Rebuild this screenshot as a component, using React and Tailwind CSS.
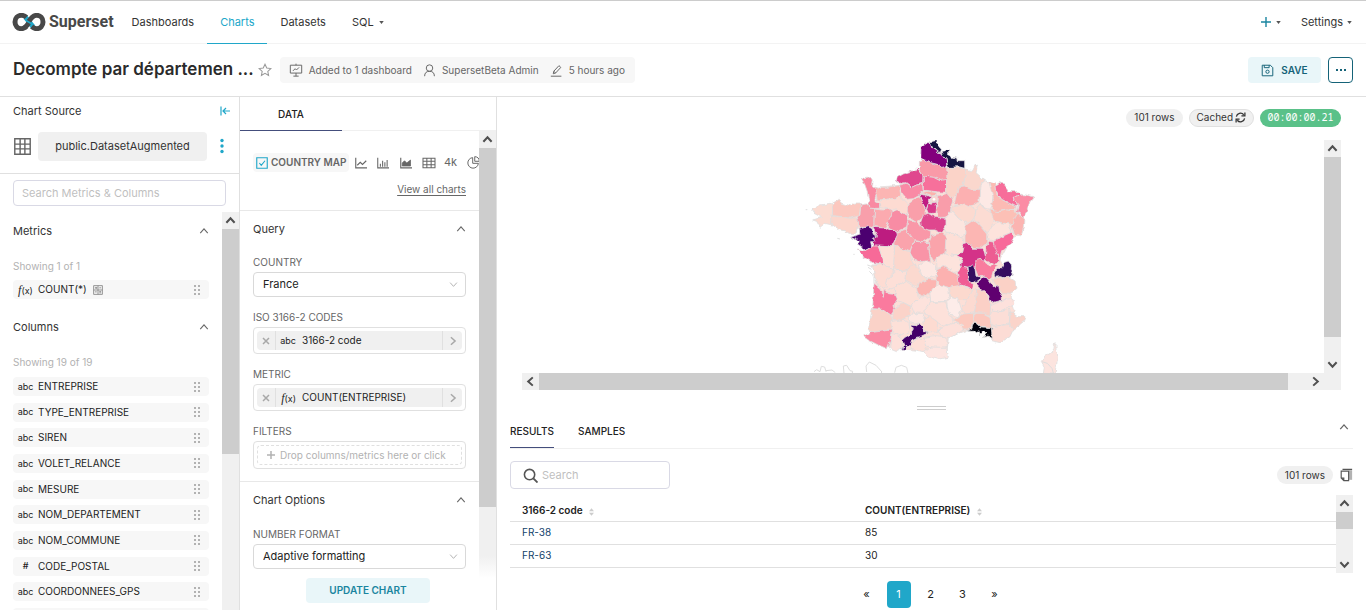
import React from "react";

const DEPARTMENTS = [
  ["#fcdcd2", "35,240 60,225 90,220 97,222 98,240 96,258 96,285 75,280 60,292 50,274 38,270 65,262 42,250"],
  ["#fcc8bf", "97,220 108,214 118,208 124,220 132,222 150,228 165,222 182,222 180,238 178,258 160,262 150,265 130,260 98,257"],
  ["#fcd6cc", "96,258 112,260 130,260 150,265 170,263 174,290 168,310 150,310 138,302 120,300 95,282"],
  ["#f89fab", "182,225 200,222 215,235 224,237 222,262 222,290 205,292 178,292 170,270 180,255"],
  ["#f98aa2", "183,142 194,146 212,142 217,150 215,165 224,172 232,188 225,205 226,216 240,222 238,235 215,235 203,225 208,215 205,205 202,185 195,165"],
  ["#fcb5b3", "224,168 235,172 260,172 285,168 298,166 302,195 285,205 260,208 232,210 228,190"],
  ["#fddbd2", "238,214 260,208 285,205 302,198 325,222 330,240 322,256 300,245 280,238 265,238 240,232"],
  ["#fbaaaf", "224,237 250,240 272,236 276,250 266,275 255,292 222,290 222,270"],
  ["#f88ca4", "274,246 290,240 322,256 326,268 320,290 305,298 290,305 262,294 266,275"],
  ["#e0478e", "288,155 292,142 310,132 335,124 353,116 369,134 368,160 350,165 335,172 318,158 300,160"],
  ["#f98aa5", "298,166 318,160 335,172 350,165 368,162 370,182 360,195 340,206 322,208 308,192"],
  ["#f99aa8", "358,94 378,90 392,98 412,103 441,112 443,150 420,152 400,142 370,138 358,118"],
  ["#f76f9b", "370,138 400,142 420,152 440,148 440,187 418,186 400,184 370,180"],
  ["#83007d", "363,50 378,38 390,38 396,55 412,66 425,68 432,82 438,82 441,110 425,112 412,103 392,98 378,90 362,90"],
  ["#171242", "390,36 410,31 414,46 424,58 422,66 412,66 398,54"],
  ["#171242", "427,64 436,62 440,57 446,60 446,73 457,82 470,84 472,92 494,92 494,115 475,110 460,112 445,112 438,84 430,80"],
  ["#fbd3c8", "441,114 470,112 500,118 495,145 490,165 475,172 470,190 458,208 440,190 440,150"],
  ["#fad7cd", "500,118 518,122 524,110 532,105 528,128 542,140 555,152 545,160 540,178 512,178 490,168 494,145"],
  ["#fcb0b1", "475,170 490,168 512,178 538,178 538,215 520,224 510,228 490,226 462,225"],
  ["#fde9e5", "540,165 555,152 572,158 578,190 578,215 570,238 550,232 537,215"],
  ["#fcbbb4", "566,154 588,160 590,190 605,208 646,230 645,242 620,240 585,246 572,232 580,205"],
  ["#f76d9a", "588,165 598,158 612,162 628,185 655,185 668,192 655,199 640,198 642,210 655,225 648,230 605,208 590,185"],
  ["#fb8ca5", "640,200 672,194 702,200 690,215 672,262 650,245 655,225 642,210"],
  ["#fcc0b6", "570,240 600,245 620,240 645,242 650,252 642,280 630,286 605,278 578,270"],
  ["#fbb4b1", "650,250 672,262 670,295 662,318 642,310 636,290"],
  ["#fcdad0", "458,232 478,226 495,222 510,228 525,235 528,248 520,268 500,280 475,265 458,245"],
  ["#fcdcd3", "528,236 540,222 552,235 575,250 580,270 568,305 558,308 535,282 525,265"],
  ["#fce5df", "438,250 458,246 475,265 498,282 495,312 480,322 455,310 438,310 430,290"],
  ["#fcb6b3", "495,288 520,270 535,282 560,312 560,340 540,355 510,350 495,338"],
  ["#fde3dc", "565,310 580,285 600,278 630,282 632,308 605,318 580,332 562,328"],
  ["#fddfd8", "630,290 642,310 633,312"],
  ["#fddfd7", "436,312 455,310 488,322 492,342 485,370 455,376 435,368"],
  ["#f8699a", "580,335 600,322 632,308 642,318 630,345 605,365 600,384 592,376 580,355"],
  ["#ed5d92", "558,347 568,334 580,336 582,350 592,374 596,398 585,404 570,398 556,390"],
  ["#d43388", "490,345 505,340 520,355 550,355 558,385 555,392 535,395 528,410 505,412 480,408 488,385 470,374 485,368"],
  ["#c01d82", "358,193 378,195 392,202 388,215 378,238 364,215"],
  ["#fcb3ac", "362,188 385,184 412,188 412,196 392,198"],
  ["#fad5ce", "394,202 412,200 412,216 394,216"],
  ["#d93b8b", "385,222 405,216 410,230 408,250 385,250 380,238"],
  ["#f99daa", "412,198 440,190 445,195 458,212 450,245 436,262 412,262 410,235"],
  ["#f99faa", "325,222 345,207 358,200 378,240 378,255 362,268 350,278 330,265 325,245"],
  ["#df478e", "362,276 370,255 385,250 405,262 438,265 438,290 425,310 405,300 380,300 364,290"],
  ["#f998a8", "324,268 350,278 364,290 392,304 392,320 370,335 345,332 330,315 320,298"],
  ["#faa3ac", "290,305 318,298 332,316 345,332 335,350 330,365 310,358 284,345"],
  ["#faa4ab", "392,318 425,308 438,318 435,370 420,383 400,392 388,370 385,335"],
  ["#f994a7", "335,350 345,335 370,335 385,338 388,370 392,392 360,395 340,385 330,368"],
  ["#bd1b80", "218,292 255,294 290,306 292,315 280,340 262,350 222,350 215,335 232,318"],
  ["#4b0070", "152,322 180,312 178,298 205,290 216,296 220,310 232,318 220,326 225,335 212,335 215,350 200,360 185,350 172,342 178,335 165,328"],
  ["#f76a98", "172,357 195,362 220,348 235,348 246,380 248,402 218,398 190,380"],
  ["#fddfd7", "235,348 262,350 282,343 284,380 280,420 250,402 246,380"],
  ["#fcd7cd", "284,344 310,358 330,367 335,390 345,405 320,420 290,422 281,412"],
  ["#fddcd3", "218,408 250,402 285,422 262,445 262,468 250,475 238,462 225,445"],
  ["#fddfd7", "265,445 290,422 322,420 318,450 290,470 265,480 258,465"],
  ["#fbd9cf", "320,420 345,400 360,430 378,448 350,468 335,460 318,450"],
  ["#fde8e3", "355,405 385,393 410,410 410,435 385,448 365,435"],
  ["#fcb5b1", "348,480 355,458 385,448 408,450 405,475 378,498 360,497"],
  ["#fddfd6", "285,472 315,452 350,475 355,505 332,528 310,518 290,510"],
  ["#fde8e3", "390,490 405,470 420,462 445,470 450,505 435,515 392,515"],
  ["#fde3dc", "408,385 435,368 455,376 470,374 482,398 482,418 460,425 430,410 412,415"],
  ["#fcb1b0", "410,420 430,410 460,422 480,445 478,468 450,472 420,465 408,450"],
  ["#f05c94", "472,425 485,408 502,412 508,450 520,467 515,478 495,468 478,465"],
  ["#340d5e", "504,412 515,405 525,415 528,438 540,440 543,445 530,455 520,460 508,452"],
  ["#f97c9e", "528,392 540,388 565,405 590,405 596,408 580,422 575,440 565,448 555,438 535,440 525,415"],
  ["#360f60", "582,430 605,410 610,398 625,393 635,405 634,420 640,432 620,445 600,440 585,442"],
  ["#fbd1c6", "575,445 605,445 625,442 645,455 648,475 630,490 605,488 590,470"],
  ["#60006f", "528,460 545,446 555,438 570,455 580,470 596,466 600,490 607,500 605,510 575,518 565,495 545,478"],
  ["#fcd9ce", "448,472 480,466 515,478 520,490 505,510 475,508 452,500"],
  ["#fcdad1", "520,478 530,478 528,510 520,548 495,555 485,540 500,512"],
  ["#fbd0c6", "530,478 545,478 562,495 568,510 572,530 570,555 550,550 520,548 528,510"],
  ["#fdece9", "440,515 455,502 475,508 485,540 475,560 445,555"],
  ["#fde1da", "370,540 392,518 435,515 450,555 460,575 430,588 400,570 378,555"],
  ["#fcc9be", "460,570 488,552 520,550 522,575 505,600 480,600 490,585"],
  ["#fcc7bd", "522,550 550,550 570,560 575,592 540,588 522,572"],
  ["#fde1dc", "570,528 610,510 635,505 642,520 628,530 605,545 580,542"],
  ["#fcded7", "570,555 580,540 600,545 630,538 628,578 590,590 572,582"],
  ["#fbd4ca", "632,545 652,560 675,560 670,575 652,590 638,600 628,580"],
  ["#fcdcd5", "575,595 590,588 630,583 640,598 630,620 600,638 575,632"],
  ["#02010f", "500,604 515,598 518,582 528,580 540,590 560,592 576,594 574,600 577,628 568,625 565,618 550,622 558,612 550,604 541,614 536,602 530,612 522,604"],
  ["#fde0da", "415,600 450,582 475,580 490,600 455,622 425,622"],
  ["#fa7a9e", "222,460 240,475 250,502 252,478 262,488 285,490 294,512 282,522 285,540 272,555 250,538 218,536"],
  ["#fad2c8", "216,538 250,540 272,555 278,575 270,598 210,608 205,600"],
  ["#fa8ba4", "188,618 210,608 240,604 278,600 272,630 262,656 235,645 205,630"],
  ["#fde0da", "276,610 290,615 308,630 305,658 290,665 268,656"],
  ["#fde0d8", "272,575 310,568 330,585 325,605 300,618 278,605"],
  ["#fbd3c9", "280,540 310,518 332,530 328,558 305,570 278,568"],
  ["#fde7e2", "325,560 345,548 375,553 370,575 345,582 325,578"],
  ["#fde2dc", "334,525 358,500 390,502 392,518 375,540 345,552"],
  ["#fddbd1", "370,568 390,560 412,575 412,605 382,610 370,592"],
  ["#430068", "335,585 350,588 356,580 370,592 373,605 382,610 365,618 350,622 335,630 330,645 318,652 312,662 305,660 308,652 315,645 307,632 318,622 330,615 340,600"],
  ["#fddfd7", "328,645 350,624 375,626 382,650 370,665 335,655"],
  ["#fde4de", "372,622 405,617 440,620 442,650 410,654 380,648"],
  ["#fde5e1", "370,668 390,651 440,652 445,682 415,688 385,680"],
  ["#fce4df", "724,694 735,680 754,670 762,655 763,642 768,642 768,660 773,672 770,705 764,732 730,732 733,710"],
];

const COLUMNS = ["ENTREPRISE", "TYPE_ENTREPRISE", "SIREN", "VOLET_RELANCE", "MESURE", "NOM_DEPARTEMENT", "NOM_COMMUNE", "CODE_POSTAL", "COORDONNEES_GPS"];

function Icon({ children, className = "size-4", box = "0 0 16 16" }) {
  return (
    <svg viewBox={box} className={className} fill="none" stroke="currentColor" strokeWidth="1" aria-hidden="true">
      {children}
    </svg>
  );
}

function Chevron({ dir = "up", className = "size-3", weight = "1.3" }) {
  const d = { up: "M1.5 8.5L6 3.5L10.5 8.5", down: "M1.5 3.5L6 8.5L10.5 3.5", left: "M8.5 1.5L3.5 6L8.5 10.5", right: "M3.5 1.5L8.5 6L3.5 10.5" }[dir];
  return (
    <Icon box="0 0 12 12" className={`${className} shrink-0`}>
      <path d={d} strokeWidth={weight} />
    </Icon>
  );
}

function ScrollArrow({ dir }) {
  return (
    <span className="flex size-[17px] shrink-0 items-center justify-center text-[#505050]">
      <Chevron dir={dir} className="size-[11px]" weight="2.2" />
    </span>
  );
}

function FranceMap() {
  return (
    <svg viewBox="0 0 810 729" className="h-[243px] w-[270px] shrink-0" role="img" aria-label="Map of France by department">
      <filter id="rough" x="0" y="0" width="1" height="1">
        <feTurbulence type="fractalNoise" baseFrequency="0.06" numOctaves="2" seed="4" />
        <feDisplacementMap in="SourceGraphic" scale="13" xChannelSelector="R" yChannelSelector="G" />
      </filter>
      <g filter="url(#rough)">
        <path
          fill="#fcdfd7"
          stroke="#dedede"
          strokeWidth="2"
          d="M226 172L298 166L353 120L372 138L440 112L500 120L553 155L600 165L650 232L664 312L635 325L600 390L630 440L640 470L632 510L642 540L640 598L600 636L570 600L505 600L445 622L440 682L385 680L370 664L305 655L265 650L210 608L222 540L226 460L218 405L250 400L222 350L222 296L170 298L100 270L97 230L182 230L230 235Z"
        />
        <g stroke="#dedede" strokeWidth="2.4" strokeLinejoin="round">
          {DEPARTMENTS.map(([fill, points]) => (
            <polygon key={points} fill={fill} points={points} />
          ))}
        </g>
      </g>
      <g fill="none" stroke="#dedede" strokeWidth="3">
        <path d="M202 405l12 4M204 412l10 6M208 424l10 10M222 440v20M225 450l18 30M112 325l8 2M17 239h5M160 373h4" />
        <path d="M42 725l8 -6l10 6l4 -16l10 2l4 14M78 722l18 -2l10 8M132 730l-2 -22l10 -2l10 16l8 2l-2 8M200 726l-2 -18l10 -12l20 10l18 20l-6 6M284 728l4 -16l16 -6l16 6l4 18M726 695l16 5l14 15l4 14" />
      </g>
      <circle cx="402" cy="208" r="4" fill="#fff" />
    </svg>
  );
}

function FieldLabel({ children, htmlFor }) {
  return <label htmlFor={htmlFor} className="flex h-4 items-center text-[10px] text-[#666]">{children}</label>;
}

function SelectField({ id, label, value }) {
  return (
    <div>
      <FieldLabel htmlFor={id}>{label}</FieldLabel>
      <div className="relative mt-[2px]">
        <select id={id} className="block h-[25px] w-full appearance-none rounded border border-[#d9d9d9] bg-white px-[9px] text-[11px] text-[#222]">
          <option>{value}</option>
        </select>
        <span className="pointer-events-none absolute inset-y-0 right-[8px] flex items-center text-[#b2b2b2]"><Chevron dir="down" className="size-[9px]" /></span>
      </div>
    </div>
  );
}

function DropPill({ label, kind, value }) {
  return (
    <div>
      <FieldLabel>{label}</FieldLabel>
      <div className="mt-[2px] flex h-[27px] rounded border border-[#e0e0e0] p-[3px]">
        <div className="flex min-w-0 flex-1 items-center rounded-sm bg-[#f0f0f0] text-[10px] text-[#222]">
          <button aria-label={`Remove ${value}`} className="flex h-full w-[19px] items-center justify-center border-r border-[#e0e0e0] text-[#a8a8a8]">
            <Icon box="0 0 8 8" className="size-[8px]"><path d="M1 1L7 7M7 1L1 7" strokeWidth="1.5" /></Icon>
          </button>
          <span className="flex w-[20px] justify-end text-[9px]">{kind}</span>
          <span className="flex-1 pl-[6px]">{value}</span>
          <button aria-label={`Edit ${value}`} className="flex h-full w-[20px] items-center justify-center border-l border-[#e0e0e0] text-[#a8a8a8]"><Chevron dir="right" className="size-[10px]" weight="1.8" /></button>
        </div>
      </div>
    </div>
  );
}

const Fx = () => <span><i className="font-['Liberation_Serif',serif] text-[12px]">f</i>(x)</span>;

function FieldRow({ kind, name, extra }) {
  return (
    <li className="flex h-[19px] shrink-0 items-center rounded bg-[#f7f7f7] pr-[9px] text-[#222]">
      <span className="flex w-[25px] justify-center text-[9px]">{kind}</span>
      <span className="text-[10px]">{name}</span>
      {extra}
      <svg viewBox="0 0 6 10" className="ml-auto h-[10px] w-[6px]" fill="#b2b2b2" aria-hidden="true">
        <path d="M0 0h2v2H0zM4 0h2v2H4zM0 4h2v2H0zM4 4h2v2H4zM0 8h2v2H0zM4 8h2v2H4z" />
      </svg>
    </li>
  );
}

function Section({ title, className = "" }) {
  return (
    <button className={`flex h-5 w-full shrink-0 items-center justify-between text-[11px] text-[#333] ${className}`}>
      {title}<span className="text-[#666]"><Chevron className="size-[10px]" /></span>
    </button>
  );
}

const Caret = () => <svg viewBox="0 0 6 4" className="h-[3px] w-[5px]" fill="#555" aria-hidden="true"><path d="M0 0h6L3 4z" /></svg>;

const GridIcon = ({ className }) => (
  <Icon className={className}><path d="M1.5 1.5h13v13h-13zM1.5 6h13M1.5 10h13M6 1.5v13M10 1.5v13" strokeWidth="1.2" /></Icon>
);

function NavBar() {
  return (
    <header className="flex h-[44px] shrink-0 items-stretch border-t border-b border-t-[#ccc] border-b-[#f3f3f3] pl-3 pr-[14px] text-[11px] text-[#333]">
      <a href="#home" className="flex items-center gap-[3px]">
        <svg viewBox="0 0 100 54" className="h-[18px] w-[34px]" fill="none" strokeWidth="15" aria-hidden="true">
          <path d="M38 12C45 17 54 33 63 42" stroke="#20a7c9" />
          <path d="M42 41C37 45 33 47 27 47C16 47 8 38 8 27S16 7 27 7C33 7 38 9 42 13" stroke="#484848" />
          <path d="M58 41C63 45 67 47 73 47C84 47 92 38 92 27S84 7 73 7C62 7 56 15 50 25" stroke="#484848" />
          <path d="M37 44C42 40 46 35 49 30" stroke="#484848" />
        </svg>
        <span className="font-['Roboto',sans-serif] text-[16px] font-bold text-[#484848]">Superset</span>
      </a>
      <nav className="ml-[5px] flex items-stretch">
        <a href="#dashboards" className="flex items-center px-[13px]">Dashboards</a>
        <a href="#charts" className="-mb-px flex items-center border-b border-[#20a7c9] px-[13px] text-[#20a7c9]">Charts</a>
        <a href="#datasets" className="flex items-center px-[13px]">Datasets</a>
        <button className="flex items-center gap-[5px] px-[13px]">SQL <Caret /></button>
      </nav>
      <button aria-label="Create" className="ml-auto flex items-center gap-[5px] text-[#1a85a0]">
        <Icon box="0 0 10 10" className="size-[10px]"><path d="M5 0v10M0 5h10" strokeWidth="1.4" /></Icon><Caret />
      </button>
      <button className="ml-5 flex items-center gap-[4px]">Settings <Caret /></button>
    </header>
  );
}

function TitleBar() {
  return (
    <div className="flex h-[53px] shrink-0 items-center border-b border-[#e0e0e0] pl-[13px] pr-[13px]">
      <h1 className="text-[17px] font-semibold text-[#2b2b2b]">Decompte par départemen ...</h1>
      <button aria-label="Favorite" className="ml-[4px] text-[#999]">
        <Icon className="size-[14px]"><path d="M8 1.5L10 5.8L14.7 6.4L11.2 9.6L12.1 14.2L8 11.9L3.9 14.2L4.8 9.6L1.3 6.4L6 5.8Z" strokeWidth="1.2" /></Icon>
      </button>
      <div className="ml-[8px] flex h-[26px] items-center rounded bg-[#f7f7f7] pl-[9px] pr-[10px] text-[10px] text-[#666]">
        <Icon className="size-[14px]"><path d="M1.5 2.5h13v9h-13zM8 .8v1.7M8 11.500v3.500M5 15h6M4.500 9l2.500-2.500l1.500 1.500l3-3" strokeWidth="1.100" /></Icon>
        <span className="ml-[6px]">Added to 1 dashboard</span>
        <Icon className="ml-[11px] size-[13px]"><path d="M2 15c0-4 2-6 6-6s6 2 6 6M8 9a4 4 0 1 0 0-8a4 4 0 0 0 0 8z" strokeWidth="1.2" /></Icon>
        <span className="ml-[6px]">SupersetBeta Admin</span>
        <Icon className="ml-[11px] size-[13px]"><path d="M1 15h13M4 12l.6-3L11 2l2.300 2.200L7 11zM4.600 9L7 11" strokeWidth="1.2" /></Icon>
        <span className="ml-[6px]">5 hours ago</span>
      </div>
      <button className="ml-auto flex h-[26px] w-[73px] items-center justify-center gap-[7px] rounded bg-[#e9f6f9] text-[10px] font-semibold text-[#156378]">
        <Icon className="size-[13px]"><path d="M1.500 1.500h10l3 3v10h-13zM4 1.500v3h6v-3M8 7.500a2 2 0 1 0 0 4a2 2 0 0 0 0-4z" strokeWidth="1.200" /></Icon>
        SAVE
      </button>
      <button aria-label="More actions" className="ml-[7px] flex h-[26px] w-[25px] items-center justify-center rounded border border-[#156378] text-[#156378]">
        <svg viewBox="0 0 10 2" className="h-[2px] w-[10px]" fill="currentColor" aria-hidden="true"><path d="M0 0h2v2H0zM4 0h2v2H4zM8 0h2v2H8z" /></svg>
      </button>
    </div>
  );
}

function SourcePanel() {
  return (
    <aside className="flex w-[240px] shrink-0 flex-col border-r border-[#e0e0e0]">
      <div className="flex h-7 shrink-0 items-center justify-between pl-[13px] pr-[9px] text-[11px] text-[#333]">
        Chart Source
        <button aria-label="Collapse" className="text-[#20a7c9]"><Icon box="0 0 10 10" className="size-[10px]"><path d="M1 .5v9M3 5h7M6 2L3 5l3 3" strokeWidth="1.200" /></Icon></button>
      </div>
      <div className="flex h-[49px] shrink-0 items-center border-b border-[#e0e0e0] pb-[6px] pl-[13px] text-[#666]">
        <GridIcon className="size-[19px]" />
        <button className="ml-[6px] h-[29px] w-[169px] rounded bg-[#f0f0f0] text-[11px] text-[#333]">public.DatasetAugmented</button>
        <button aria-label="Dataset menu" className="ml-[13px] text-[#20a7c9]">
          <svg viewBox="0 0 4 16" className="h-[16px] w-[4px]" fill="currentColor" aria-hidden="true"><circle cx="2" cy="2.500" r="1.700" /><circle cx="2" cy="8" r="1.700" /><circle cx="2" cy="13.500" r="1.700" /></svg>
        </button>
      </div>
      <div className="shrink-0 pl-[13px] pr-[13px] py-[6px]">
        <input aria-label="Search Metrics & Columns" placeholder="Search Metrics & Columns" className="block h-[26px] w-full rounded border border-[#d9d9e5] px-2 text-[11px] placeholder:text-[#bfbfbf]" />
      </div>
      <div className="flex min-h-0 flex-1">
        <div className="flex min-w-0 flex-1 flex-col overflow-hidden pl-[13px] pr-[13px] pt-[9px]">
          <Section title="Metrics" />
          <p className="mt-[15px] flex h-5 shrink-0 items-center text-[10px] text-[#b2b2b2]">Showing 1 of 1</p>
          <ul className="mt-[4px] shrink-0">
            <FieldRow kind={<Fx />} name="COUNT(*)" extra={<Icon className="ml-[6px] size-[10px] text-[#888]"><path d="M1 1h14v14H1zM8 1v14M1 8h14M3 4.500h4M5 3v3.500M10 4.500h3M3 11h3M10 10.500h3M10 12.500h3" strokeWidth="1.400" /></Icon>} />
          </ul>
          <Section title="Columns" className="mt-[18px]" />
          <p className="mt-[15px] flex h-5 shrink-0 items-center text-[10px] text-[#b2b2b2]">Showing 19 of 19</p>
          <ul className="mt-[5px] flex h-[250px] shrink-0 flex-col justify-between">
            {COLUMNS.map((name) => <FieldRow key={name} kind={name === "CODE_POSTAL" ? <b className="font-medium">#</b> : "abc"} name={name} />)}
            <FieldRow />
          </ul>
        </div>
        <div className="w-[17px] bg-[#f0f0f0]" aria-hidden="true">
          <ScrollArrow dir="up" />
          <div className="h-[225px] bg-[#cdcdcd]" />
        </div>
      </div>
    </aside>
  );
}

function ControlPanel() {
  return (
    <section className="flex w-[257px] shrink-0 flex-col border-r border-[#e0e0e0]">
      <div role="tablist" className="h-[34px] shrink-0 border-b border-[#f0f0f0]">
        <button role="tab" aria-selected="true" className="h-[34px] w-[102px] border-b border-[#444e7c] pt-[2px] text-[10px] font-medium text-[#222]">DATA</button>
      </div>
      <div className="flex min-h-0 flex-1">
        <div className="min-w-0 flex-1 overflow-hidden">
          <div className="flex h-[63px] w-[239px] items-center overflow-hidden pl-[13px] text-[#666]">
            <button className="flex h-[19px] w-[96px] shrink-0 items-center gap-[3px] rounded bg-[#f7f7f7] pl-[3px] text-[10px] font-semibold whitespace-nowrap">
              <Icon className="size-[12px] shrink-0 text-[#20a7c9]"><path d="M1 1h14v14H1zM4.500 8l2.500 3l5-6" strokeWidth="1.500" /></Icon>
              COUNTRY MAP
            </button>
            <button aria-label="Line chart" className="ml-[6px]"><Icon className="size-[12px]"><path d="M1 1v13.500h15M3 11l4-4l3 3l5-5" strokeWidth="1.500" /></Icon></button>
            <button aria-label="Bar chart" className="ml-[10px]"><Icon className="size-[12px]"><path d="M1 1v13.500h15M4.500 13V9M7.500 13V5M10.500 13V7M13.500 13V4" strokeWidth="1.400" /></Icon></button>
            <button aria-label="Area chart" className="ml-[11px]"><Icon className="size-[12px]"><path d="M1 1v13.500h15" strokeWidth="1.500" /><path d="M3 12V8l3-3l3 3l5-4v8z" fill="currentColor" /></Icon></button>
            <button aria-label="Table" className="ml-[10px]"><Icon box="0 0 16 14" className="h-[12px] w-[14px]"><path d="M1 1.500h14v11H1zM1 5h14M1 9h14M5.500 1v12M10.500 1v12" strokeWidth="1.200" /></Icon></button>
            <button className="ml-[8px] text-[11px]">4k</button>
            <button aria-label="Pie chart" className="ml-[10px] shrink-0"><Icon className="size-[13px]"><path d="M7 2a6.500 6.500 0 1 0 7 7H7zM9.500 .800v5.700h5.700a6 6 0 0 0-5.700-5.700z" strokeWidth="1.200" /></Icon></button>
          </div>
          <div className="flex h-[17px] items-start justify-end border-b border-[#e8e8e8] pr-[13px]">
            <a href="#charts" className="-mt-[13px] text-[10px] leading-[16px] text-[#666] underline underline-offset-2">View all charts</a>
          </div>
          <div className="flex flex-col px-[13px]">
            <Section title="Query" className="mt-[8px]" />
            <div className="mt-[15px] flex flex-col gap-3">
              <SelectField id="country" label="COUNTRY" value="France" />
              <DropPill label="ISO 3166-2 CODES" kind="abc" value="3166-2 code" />
              <DropPill label="METRIC" kind={<Fx />} value="COUNT(ENTREPRISE)" />
              <div>
                <FieldLabel>FILTERS</FieldLabel>
                <div className="mt-[2px] h-[28px] rounded border border-[#e0e0e0] p-[3px]">
                  <button className="flex h-full w-full items-center gap-[5px] rounded border border-dashed border-[#e0e0e0] pl-[9px] text-[10px] text-[#b2b2b2]">
                    <Icon box="0 0 8 8" className="size-[8px]"><path d="M4 0v8M0 4h8" strokeWidth="1.500" /></Icon>
                    Drop columns/metrics here or click
                  </button>
                </div>
              </div>
            </div>
          </div>
          <div className="mt-3 flex flex-col border-t border-[#e8e8e8] px-[13px]">
            <Section title="Chart Options" className="mt-[8px] mb-[16px]" />
            <SelectField id="format" label="NUMBER FORMAT" value="Adaptive formatting" />
          </div>
        </div>
        <div className="w-[17px] bg-linear-to-b from-[#f0f0f0] from-95% to-white" aria-hidden="true">
          <ScrollArrow dir="up" />
          <div className="h-[359px] bg-[#cdcdcd]" />
        </div>
      </div>
      <div className="flex h-[32px] shrink-0 items-start justify-center">
        <button className="h-[25px] w-[124px] rounded bg-[#e9f6f9] text-[10px] font-semibold text-[#1a85a0]">UPDATE CHART</button>
      </div>
    </section>
  );
}

function Sort() {
  return <svg viewBox="0 0 6 9" className="ml-[4px] inline h-[8px] w-[5px]" fill="#ccc" aria-hidden="true"><path d="M0 3.500L3 0L6 3.500zM0 5.500L3 9L6 5.500z" /></svg>;
}

function ChartPanel() {
  return (
    <main className="flex min-w-0 flex-1 flex-col">
      <div className="flex h-[43px] shrink-0 items-center justify-end gap-[6px] pr-[25px] pb-[2px] text-[10px] text-[#333]">
        <span className="flex h-[18px] items-center rounded-full bg-[#f0f0f0] px-[8px]">101 rows</span>
        <button className="flex h-[18px] items-center gap-[2px] rounded-full border border-[#e0e0e0] bg-[#f0f0f0] px-[7px]">
          Cached
          <Icon box="0 0 12 12" className="size-[11px]"><path d="M1.500 5a4.500 4.500 0 0 1 8-2M10.500 7a4.500 4.500 0 0 1-8 2M10.800 .500v3.700H7M1.200 11.500V7.800H5" strokeWidth="1.400" /></Icon>
        </button>
        <span className="flex h-[18px] w-[81px] items-center justify-center rounded-full bg-[#5ac189] font-['Noto_Sans_Mono','DejaVu_Sans_Mono',monospace] text-[10px] text-white">00:00:00.21</span>
      </div>
      <div className="mr-[25px] ml-[25px] flex h-[233px] shrink-0 overflow-hidden">
        <div className="flex flex-1 items-end justify-center overflow-hidden pl-6"><FranceMap /></div>
        <div className="flex w-[17px] flex-col bg-[#f0f0f0]" aria-hidden="true">
          <ScrollArrow dir="up" />
          <div className="h-[180px] bg-[#cdcdcd]" />
          <div className="flex-1" />
          <ScrollArrow dir="down" />
        </div>
      </div>
      <div className="mx-[25px] flex h-[17px] shrink-0 bg-[#f0f0f0] pr-[17px]" aria-hidden="true">
        <ScrollArrow dir="left" />
        <div className="flex-1 bg-[#cdcdcd]" />
        <div className="w-[19px]" />
        <ScrollArrow dir="right" />
      </div>
      <div className="flex h-[27px] shrink-0 items-end justify-center pb-[7px]"><div className="h-[4px] w-[29px] border-y border-[#ccc]" /></div>
      <div role="tablist" className="mr-[13px] ml-[13px] flex h-[32px] shrink-0 border-b border-[#f0f0f0] text-[10px] font-medium text-[#222]">
        <button role="tab" aria-selected="true" className="border-b border-[#444e7c] pb-[2px]">RESULTS</button>
        <button role="tab" aria-selected="false" className="ml-[24px] pb-[2px]">SAMPLES</button>
        <button aria-label="Collapse results" className="mr-[4px] mb-[11px] ml-auto text-[#666]"><Chevron className="size-[10px]" weight="1.600" /></button>
      </div>
      <div className="ml-[13px] mr-[13px] flex h-[46px] shrink-0 items-center pt-[6px]">
        <label className="flex h-[28px] w-[160px] items-center gap-[4px] rounded border border-[#d9d9e5] pl-3">
          <Icon className="size-[15px] shrink-0 text-[#555]"><circle cx="7" cy="7" r="5.500" strokeWidth="1.700" /><path d="M11 11l4.500 4.500" strokeWidth="2" /></Icon>
          <input aria-label="Search" placeholder="Search" className="min-w-0 flex-1 text-[11px] placeholder:text-[#bfbfbf]" />
        </label>
        <span className="ml-auto flex h-[18px] items-center rounded-full bg-[#f0f0f0] px-[8px] text-[10px] text-[#333]">101 rows</span>
        <button aria-label="Copy" className="ml-[6px] text-[#555]">
          <Icon className="size-[14px]"><path d="M11.500 2.500h3.500v11h-3.500z" fill="#b2b2b2" stroke="none" /><path d="M4 1.500h11M2.500 3.500h8.500v11H5.500l-3-3zM5.500 14.500v-3h-3" strokeWidth="1.300" /></Icon>
        </button>
      </div>
      <div className="ml-[13px] mr-[13px] flex h-[78px] shrink-0">
        <div className="flex-1">
          <table className="w-full table-fixed text-left text-[10px] text-[#222]">
            <thead>
              <tr className="h-[26px] border-b border-[#e0e0e0]">
                <th className="w-[343px] pt-[6px] pl-[12px] font-semibold">3166-2 code <Sort /></th>
                <th className="pt-[6px] pl-[12px] font-semibold">COUNT(ENTREPRISE) <Sort /></th>
              </tr>
            </thead>
            <tbody>
              <tr className="h-[23px] border-b border-[#e0e0e0]"><td className="pl-[12px] text-[#12426b]">FR-38</td><td className="pl-[12px]">85</td></tr>
              <tr className="h-[23px] border-b border-[#e0e0e0]"><td className="pl-[12px] text-[#12426b]">FR-63</td><td className="pl-[12px]">30</td></tr>
            </tbody>
          </table>
        </div>
        <div className="flex w-[17px] flex-col bg-[#f0f0f0]" aria-hidden="true">
          <ScrollArrow dir="up" />
          <div className="h-[17px] bg-[#cdcdcd]" />
          <div className="flex-1" />
          <ScrollArrow dir="down" />
        </div>
      </div>
      <nav aria-label="Pagination" className="mt-[8px] flex h-[27px] shrink-0 justify-center gap-[8px] pr-[2px] text-[11px] text-[#222]">
        <button className="w-6">«</button>
        <button aria-current="page" className="w-6 rounded-sm bg-[#20a7c9] text-white">1</button>
        <button className="w-6">2</button>
        <button className="w-6">3</button>
        <button className="w-6">»</button>
      </nav>
    </main>
  );
}

export default function App() {
  return (
    <div className="flex h-screen flex-col overflow-hidden bg-white font-['Inter','Liberation_Sans',sans-serif]">
      <NavBar />
      <TitleBar />
      <div className="flex min-h-0 flex-1">
        <SourcePanel />
        <ControlPanel />
        <ChartPanel />
      </div>
    </div>
  );
}
